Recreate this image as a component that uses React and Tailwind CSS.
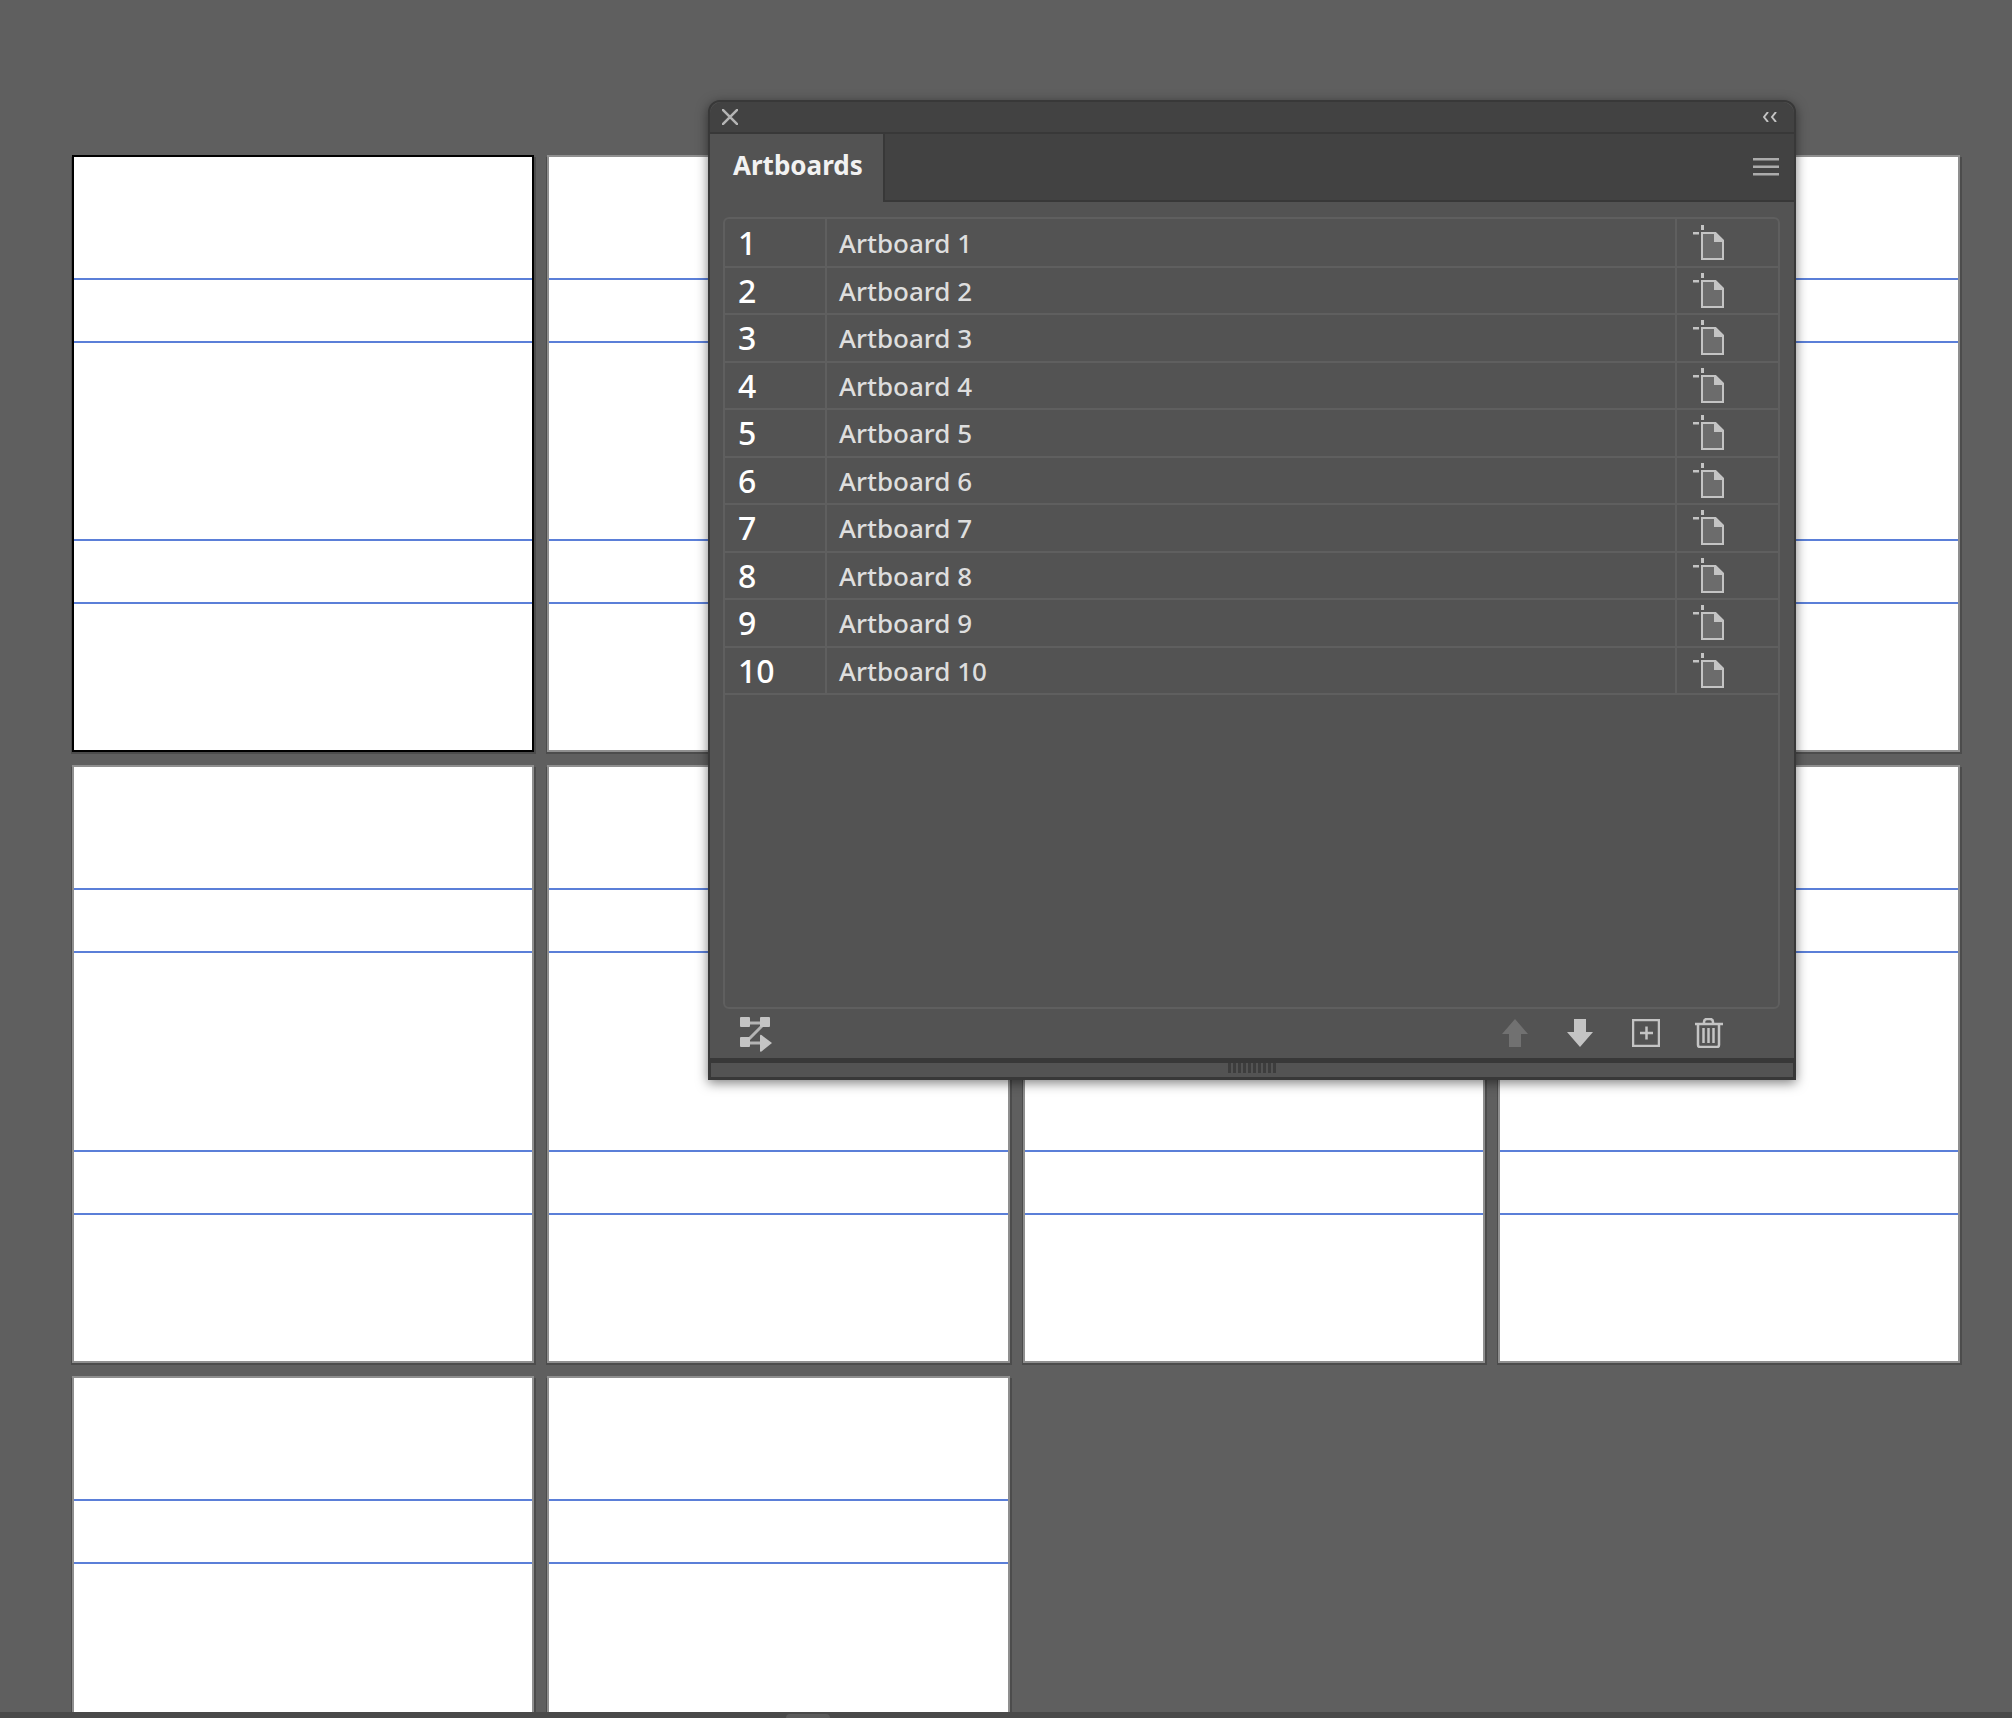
import { useState } from 'react';

const boards = Array.from({ length: 10 }, (_, i) => ({ id: i + 1, name: `Artboard ${i + 1}` }));

function PageIcon() {
    return (
        <svg width="32" height="36" viewBox="0 0 32 36" fill="none">
            <path d="M8 0h3v5H8zM0 7h6v2.500H0z" fill="#c4c4c4" />
            <path d="M9 8h13.500l7.500 7.500V34H9z" fill="#6c6c6c" stroke="#c4c4c4" strokeWidth="2" />
            <path d="M21 8h2l7 7v2h-9z" fill="#c4c4c4" />
        </svg>
    );
}

function RearrangeIcon() {
    return (
        <svg width="32" height="35" viewBox="0 0 32 35" fill="none">
            <path d="M10 6h10M10 26h10M8 23L23 8" stroke="#b4b4b4" strokeWidth="3" />
            <rect width="10" height="10" rx="1" fill="#c4c4c4" />
            <rect x="20" width="10" height="10" rx="1" fill="#c4c4c4" />
            <rect y="20" width="10" height="10" rx="1" fill="#c4c4c4" />
            <path d="M20 19q0-2 1.500-1L32 26 21.500 34.500Q20 35 20 34z" fill="#c4c4c4" />
        </svg>
    );
}

function TrashIcon() {
    return (
        <svg width="28" height="30" viewBox="0 0 28 30" fill="none" stroke="#c4c4c4" strokeWidth="2.500">
            <path d="M0 6h28" />
            <path d="M9 6V4q0-3 3-3h3q3 0 3 3v2" />
            <path d="M3 7v20q0 2 2 2h17q2 0 2-2V7M8.500 10v15M13.500 10v15M18.500 10v15" />
        </svg>
    );
}

// single page on the canvas, with its four horizontal guides
function Artboard({ active }) {
    return (
        <div
            className={
                active
                    ? 'grid aspect-[462/597] grid-rows-[121fr_2px_61fr_2px_196fr_2px_61fr_2px_146fr] border-2 border-black bg-white shadow-[-1px_2px_0_#4c4c4c,2px_2px_0_#4c4c4c]'
                    : 'grid aspect-[462/597] grid-rows-[121fr_2px_61fr_2px_196fr_2px_61fr_2px_146fr] border-2 border-[#8f8f8f] bg-white shadow-[-1px_2px_0_#4c4c4c,2px_2px_0_#4c4c4c]'
            }
        >
            <div />
            <div className="bg-[#5b7fd8]" />
            <div />
            <div className="bg-[#5b7fd8]" />
            <div />
            <div className="bg-[#5b7fd8]" />
            <div />
            <div className="bg-[#5b7fd8]" />
            <div />
        </div>
    );
}

function ArtboardsPanel({ setActive }) {
    return (
        <div className="absolute top-[100px] right-[216px] left-[708px] rounded-t-xl border-2 border-[#383838] bg-[#535353] shadow-[0_3px_12px_rgba(0,0,0,0.5)]">
            {/* title bar */}
            <div className="flex h-[30px] items-center justify-between rounded-t-xl bg-[#424242] pr-[17px] pl-3">
                <button type="button" aria-label="Close">
                    <svg width="16" height="16" viewBox="0 0 16 16" stroke="#b5b5b5" strokeWidth="2.500">
                        <path d="M0 0l16 16M16 0L0 16" />
                    </svg>
                </button>
                <button type="button" aria-label="Collapse">
                    <svg width="14" height="10" viewBox="0 0 14 10" fill="none" stroke="#c4c4c4" strokeWidth="2">
                        <path d="M5 0L1 5l4 5M13 0L9 5l4 5" />
                    </svg>
                </button>
            </div>

            {/* tabs */}
            <div className="flex h-[70px] border-t-2 border-[#383838]">
                <h2 className="w-[173px] pt-[13px] pl-[23px] text-[26px] leading-9 font-bold text-[#f2f2f2]">Artboards</h2>
                <div className="flex flex-1 items-center justify-end border-b-2 border-l-2 border-[#383838] bg-[#424242] pr-[15px]">
                    <button type="button" aria-label="Panel menu">
                        <svg width="26" height="18" viewBox="0 0 26 18" fill="#ababab">
                            <path d="M0 0h26v2.500H0zM0 7.500h26V10H0zM0 15h26v2.500H0z" />
                        </svg>
                    </button>
                </div>
            </div>

            {/* list */}
            <div className="mt-[15px] mr-[14px] ml-[13px] min-h-[792px] rounded-md border-2 border-[#5f5f5f]">
                <table className="w-full table-fixed border-collapse">
                    <tbody>
                        {boards.map((board) => (
                            <tr
                                key={board.id}
                                onClick={() => setActive(board.id)}
                                className="h-[47px] border-b-2 border-[#5f5f5f] odd:h-12 first:h-[51px]"
                            >
                                <td className="w-[101px] border-r-2 border-[#5f5f5f] py-0 pl-[13px] text-[32px] leading-10 font-medium text-white">
                                    {board.id}
                                </td>
                                <td className="py-0 pl-3 text-[26px] leading-10 font-medium text-[#dedede]">{board.name}</td>
                                <td className="w-[102px] border-l-2 border-[#5f5f5f] py-0 pl-4">
                                    <button type="button" aria-label={`${board.name} options`} className="block">
                                        <PageIcon />
                                    </button>
                                </td>
                            </tr>
                        ))}
                    </tbody>
                </table>
            </div>

            {/* actions */}
            <div className="flex h-[49px] items-start justify-between pt-2 pr-[71px] pl-[30px]">
                <button type="button" aria-label="Rearrange all">
                    <RearrangeIcon />
                </button>
                <div className="flex h-8 items-center gap-[35px]">
                    <div className="flex items-center gap-[39px]">
                        <button type="button" aria-label="Move up" disabled>
                            <svg width="26" height="28" viewBox="0 0 26 28" fill="#717171">
                                <path d="M13 0l13 15h-7v13H7V15H0z" />
                            </svg>
                        </button>
                        <button type="button" aria-label="Move down">
                            <svg width="26" height="28" viewBox="0 0 26 28" fill="#c4c4c4">
                                <path d="M13 28l13-15h-7V0H7v13H0z" />
                            </svg>
                        </button>
                        <button type="button" aria-label="New artboard">
                            <svg width="28" height="28" viewBox="0 0 28 28" fill="none" stroke="#c4c4c4" strokeWidth="2.500">
                                <path d="M1 1h26v26H1zM8 14h13M14.500 7.500v13" />
                            </svg>
                        </button>
                    </div>
                    <button type="button" aria-label="Delete artboard">
                        <TrashIcon />
                    </button>
                </div>
            </div>

            {/* resize grip */}
            <div className="flex h-5 justify-center gap-0.5 border-t-[5px] border-r border-b border-l border-[#383838]">
                {Array.from({ length: 10 }, (_, i) => (
                    <div key={i} className="h-2.5 w-[3px] bg-[#3d3d3d]" />
                ))}
            </div>
        </div>
    );
}

function App() {
    const [active, setActive] = useState(1);

    return (
        <main className="flex h-screen flex-col bg-[#5f5f5f] font-['Noto_Sans',sans-serif]">
            <div className="relative flex-1 overflow-hidden">
                <div className="grid grid-cols-4 gap-[13px] pt-[155px] pr-[52px] pl-[72px]">
                    {boards.map((board) => (
                        <Artboard key={board.id} active={board.id === active} />
                    ))}
                </div>
                <ArtboardsPanel setActive={setActive} />
            </div>
            <div className="flex h-1.5 items-end overflow-hidden bg-[#4a4a4a] pl-[786px]">
                <div className="h-1 w-11 rounded-t-full bg-[#5c5c5c]" />
            </div>
        </main>
    );
}

export default App;
